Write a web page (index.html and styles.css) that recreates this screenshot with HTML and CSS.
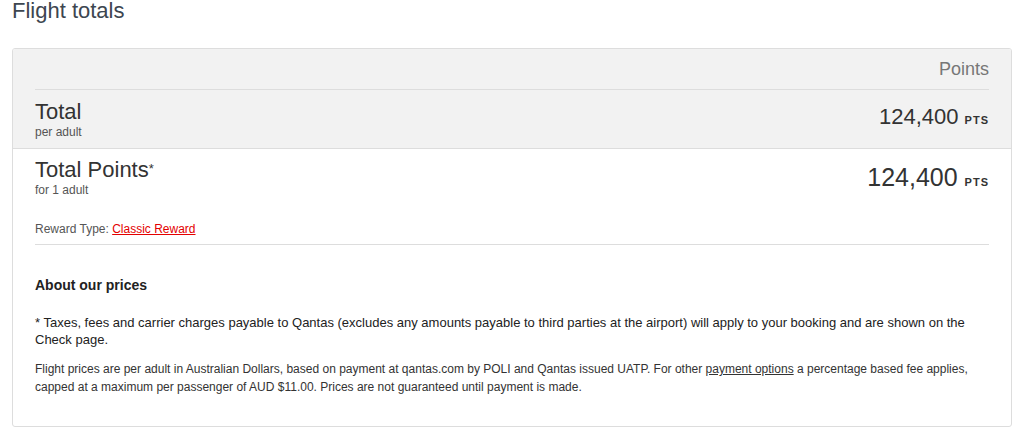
FILE: index.html
```html
<!DOCTYPE html>
<html lang="en">
<head>
<meta charset="utf-8">
<title>Flight totals</title>
<link rel="stylesheet" href="styles.css">
</head>
<body>
<div class="page">
  <h2 class="title">Flight totals</h2>
  <div class="card">
    <div class="summary">
      <div class="col-head">Points</div>
      <div class="row">
        <div class="label">
          <div class="label-main">Total</div>
          <div class="label-sub">per adult</div>
        </div>
        <div class="amount">124,400 <span class="unit">PTS</span></div>
      </div>
    </div>
    <div class="body">
      <div class="row row-points">
        <div class="label">
          <div class="label-main">Total Points<span class="star">*</span></div>
          <div class="label-sub">for 1 adult</div>
        </div>
        <div class="amount amount-lg">124,400 <span class="unit">PTS</span></div>
      </div>
      <div class="reward">Reward Type: <a href="#" class="reward-link">Classic Reward</a></div>
      <div class="about">
        <h3 class="about-title">About our prices</h3>
        <p class="note">* Taxes, fees and carrier charges payable to Qantas (excludes any amounts payable to third parties at the airport) will apply to your booking and are shown on the Check page.</p>
        <p class="fine">Flight prices are per adult in Australian Dollars, based on payment at qantas.com by POLI and Qantas issued UATP. For other <a href="#" class="fine-link">payment options</a> a percentage based fee applies, capped at a maximum per passenger of AUD $11.00. Prices are not guaranteed until payment is made.</p>
      </div>
    </div>
  </div>
</div>
</body>
</html>
```
FILE: styles.css
```css
html, body {
  margin: 0;
  padding: 0;
  background: #fff;
}
body {
  font-family: "Liberation Sans", Arial, sans-serif;
  color: #333;
}
.page {
  width: 1000px;
  margin-left: 12px;
}
.title {
  margin: 0;
  font-size: 22px;
  font-weight: normal;
  line-height: 22px;
  color: #3d4650;
}
.card {
  margin-top: 26px;
  border: 1px solid #ddd;
  border-radius: 3px;
  overflow: hidden;
}
.summary {
  background: #f2f2f2;
  border-bottom: 1px solid #ddd;
  padding: 0 22px 9px;
}
.col-head {
  text-align: right;
  font-size: 18px;
  color: #777;
  padding: 10px 0 10px;
  line-height: 20px;
  border-bottom: 1px solid #ddd;
}
.row {
  display: flex;
  justify-content: space-between;
  align-items: flex-start;
}
.summary .row {
  padding-top: 9px;
}
.label-main {
  font-size: 22px;
  line-height: 26px;
  color: #333;
}
.star {
  font-size: 13px;
  vertical-align: 4px;
}
.label-sub {
  font-size: 12px;
  line-height: 14px;
  color: #555;
}
.amount {
  font-size: 22px;
  line-height: 26px;
  color: #333;
  padding-top: 5px;
}
.amount-lg {
  font-size: 25px;
  line-height: 28px;
  padding-top: 7px;
}
.unit {
  font-size: 11px;
  font-weight: bold;
  letter-spacing: 1px;
  color: #333;
}
.body {
  padding: 0 22px 0;
}
.row-points {
  padding-top: 7px;
}
.reward {
  margin-top: 25px;
  font-size: 12px;
  line-height: 14px;
  color: #555;
  padding-bottom: 8px;
  border-bottom: 1px solid #ddd;
}
.reward-link {
  color: #e40000;
}
.about {
  padding: 32px 0 30px;
}
.about-title {
  margin: 0;
  font-size: 14px;
  line-height: 16px;
  font-weight: bold;
  color: #222;
}
.note {
  margin: 21px 0 0;
  font-size: 13px;
  line-height: 17px;
  color: #222;
}
.fine {
  margin: 12px 0 0;
  font-size: 12px;
  line-height: 18px;
  color: #333;
}
.fine-link {
  color: #333;
}
```
